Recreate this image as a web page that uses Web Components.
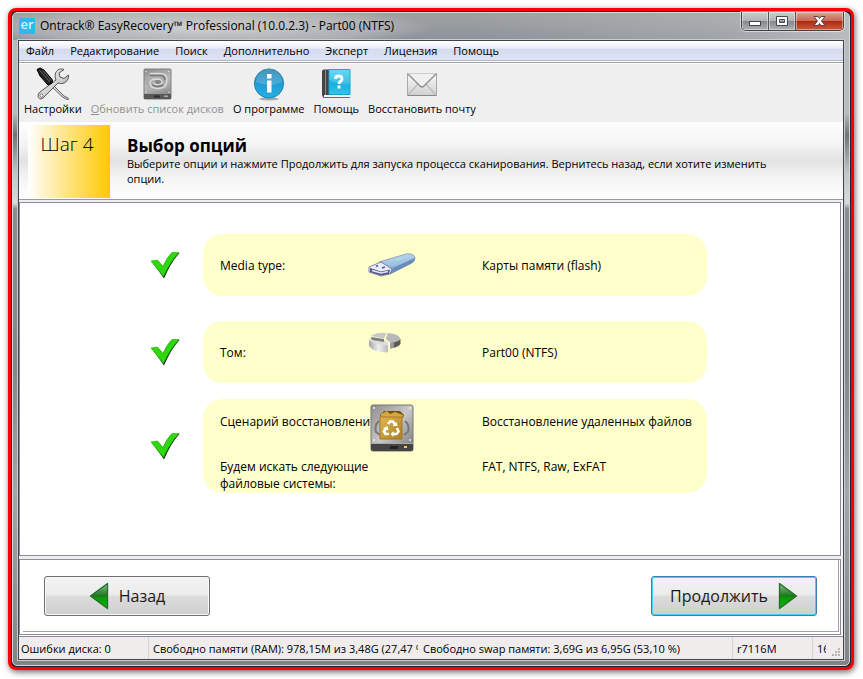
<!DOCTYPE html>
<html lang="ru">
<head>
<meta charset="utf-8">
<title>Ontrack EasyRecovery</title>
<style>
    body{
        margin: 0;
        padding: 8px 9px 9px 8px;
        box-sizing: border-box;
        min-height: 100vh;
        display: flex;
        background: white;
        font: 12px "Open Sans", "Noto Sans", sans-serif;
        color: black;
    }
</style>
</head>
<body>

<app-window>
    <span slot="title">Ontrack® EasyRecovery™ Professional (10.0.2.3) - Part00 (NTFS)</span>
    <menu-bar items="Файл,Редактирование,Поиск,Дополнительно,Эксперт,Лицензия,Помощь"></menu-bar>
    <tool-bar>
        <tool-button icon="tools">Настройки</tool-button>
        <tool-button icon="disk" disabled><u>О</u>бновить список дисков</tool-button>
        <tool-button icon="info">О программе</tool-button>
        <tool-button icon="book">Помощь</tool-button>
        <tool-button icon="mail">Восстановить почту</tool-button>
    </tool-bar>
    <step-header>
        <span slot="step">Шаг 4</span>
        <span slot="title">Выбор опций</span>
        Выберите опции и нажмите Продолжить для запуска процесса сканирования. Вернитесь назад, если хотите изменить опции.
    </step-header>
    <option-list>
        <option-row icon="usb">
            <span slot="label">Media type:</span>
            <span slot="value">Карты памяти (flash)</span>
        </option-row>
        <option-row icon="volume">
            <span slot="label">Том:</span>
            <span slot="value">Part00 (NTFS)</span>
        </option-row>
        <option-row icon="recycle" tall>
            <span slot="label">Сценарий восстановлени</span>
            <span slot="value">Восстановление удаленных файлов</span>
            <span slot="label2">Будем искать следующие файловые системы:</span>
            <span slot="value2">FAT, NTFS, Raw, ExFAT</span>
        </option-row>
    </option-list>
    <wizard-footer>
        <nav-button direction="back">Назад</nav-button>
        <nav-button direction="next">Продолжить</nav-button>
    </wizard-footer>
    <status-bar>
        <span>Ошибки диска: 0</span>
        <span>Свободно памяти (RAM): 978,15M из 3,48G (27,47 %)</span>
        <span>Свободно swap памяти: 3,69G из 6,95G (53,10 %)</span>
        <span>r7116M</span>
        <span>16</span>
    </status-bar>
</app-window>

<script>
const ICONS = {
    tools: `<svg width="34" height="34" viewBox="0 0 34 34">
        <defs><linearGradient id="m" x2="1" y2="1"><stop stop-color="#fff"/><stop offset=".6" stop-color="#ccc"/><stop offset="1" stop-color="#777"/></linearGradient></defs>
        <path d="M15 16 L28 29 L32 31 L32.500 32.500 L30 32 L26 29.500 L14 18z" fill="#ddd" stroke="#555" stroke-width=".9"/>
        <path d="M20 13 L4 25 C0 29 3 34 7 31 L9 29 L22 16 C28 18 33 14 32.500 8 L28 11.500 L24 10 L23 6 L28 2.500 C22 0 17 6 20 13z" fill="url(#m)" stroke="#555"/>
        <circle cx="5.500" cy="28.500" r="1.600" fill="#fff" stroke="#666" stroke-width=".8"/>
        <path d="M1 2.500 L4 1 L8 3 L16.500 13 L16 16 L12 18 L4 9z" fill="#222" stroke="#000"/>
        <path d="M4 3.500 L14 15 M7 3.500 L15.500 13.500" stroke="#777" stroke-width=".8"/>
    </svg>`,
    disk: `<svg width="34" height="34" viewBox="0 0 34 34">
        <defs><linearGradient id="d" x2=".3" y2="1"><stop stop-color="#8c8c8c"/><stop offset=".55" stop-color="#bdbdbd"/><stop offset="1" stop-color="#8c8c8c"/></linearGradient></defs>
        <rect x="4" y="2" width="27" height="30" rx="1" fill="url(#d)" stroke="#808080"/>
        <path d="M4 27h27v5h-27z" fill="#585858"/>
        <path d="M14 28.500h6v2h-6z" fill="#2e2e2e"/><path d="M24 28.500h4v1.500h-4z" fill="#aaa"/>
        <ellipse cx="17.500" cy="15" rx="12" ry="8.500" fill="#adadad"/>
        <path d="M10 6.500 H20 Q27 6.500 27 13 Q27 21.500 18 21.500 Q10 21.500 10 16 Q10 12 17 12 Q22 12 22 16 Q21 17.500 17 17.500 Q14.500 17.500 14.500 15.500" fill="none" stroke="#dcdcdc" stroke-width="1.400"/>
        <path d="M10 8.500 H20 Q25 8.500 25 13 M12 18 Q17 21 23 18" fill="none" stroke="#777" stroke-width="1.400"/>
        <ellipse cx="18" cy="15" rx="3" ry="2" fill="#888"/>
        <circle cx="6" cy="4.500" r=".8" fill="#ddd"/><circle cx="29" cy="4.500" r=".8" fill="#ddd"/>
        <circle cx="6" cy="25" r=".8" fill="#ddd"/><circle cx="29" cy="25" r=".8" fill="#ddd"/>
    </svg>`,
    info: `<svg width="34" height="34" viewBox="0 0 34 34">
        <defs><linearGradient id="b" x2="0" y2="1"><stop stop-color="#1f7da5"/><stop offset=".5" stop-color="#229bd3"/><stop offset="1" stop-color="#27b0e4"/></linearGradient></defs>
        <ellipse cx="17" cy="32" rx="10" ry="1.500" fill="#aaa"/>
        <circle cx="17" cy="16.500" r="14.600" fill="url(#b)" stroke="#2383ab"/>
        <path d="M4 15 A13 13 0 0 1 30 15 Q17 21 4 15z" fill="#fff" opacity=".18"/>
        <rect x="15" y="7" width="4.500" height="4.500" fill="#fff"/><rect x="15" y="13.500" width="4.500" height="12" fill="#fff"/>
    </svg>`,
    book: `<svg width="34" height="34" viewBox="0 0 34 34">
        <defs><linearGradient id="k" x2="0" y2="1"><stop stop-color="#4cd3ef"/><stop offset=".6" stop-color="#19afe0"/><stop offset="1" stop-color="#35c4ea"/></linearGradient></defs>
        <path d="M3 4 Q3 2.500 5 2.500 H31 V30 H5 Q3 30 3 28z" fill="#444"/>
        <path d="M6.500 2.500V28" stroke="#888"/>
        <path d="M10 2.500H31V27.500H10z" fill="url(#k)" stroke="#159fcb"/>
        <path d="M31 2.500V17Q22 19 10 13V2.500z" fill="#fff" opacity=".15"/>
        <path d="M5 28h26v2h-26z" fill="#eef6f8"/><path d="M4 30.500h27" stroke="#2282a0"/>
        <path d="M16.500 12 Q16.500 9 19.500 9 Q23 9 23 12 Q23 14 20.500 15 L20 17" fill="none" stroke="#fff" stroke-width="2.800"/>
        <rect x="18.500" y="18.500" width="3" height="3" fill="#fff"/>
    </svg>`,
    mail: `<svg width="34" height="34" viewBox="0 0 34 34">
        <defs><linearGradient id="e" x2="0" y2="1"><stop stop-color="#fafafa"/><stop offset="1" stop-color="#d0d0d0"/></linearGradient></defs>
        <rect x="2.500" y="6.500" width="29" height="22" fill="url(#e)" stroke="#aaa"/>
        <path d="M3 28 L13 17 M31 28 L21 17" stroke="#bbb" stroke-width="1.200"/>
        <path d="M3 7 L15 19 Q17 21 19 19 L31 7" fill="#f0f0f0" stroke="#8c8c8c" stroke-width="1.300"/>
        <path d="M3 6.500H31" stroke="#ccc"/><path d="M3 28.500H31" stroke="#888"/>
    </svg>`,
    usb: `<svg width="48" height="26" viewBox="0 0 48 26">
        <defs><linearGradient id="u" x2=".3" y2="1"><stop stop-color="#c9e0f3"/><stop offset=".6" stop-color="#9cc1e2"/><stop offset="1" stop-color="#6f93bd"/></linearGradient></defs>
        <path d="M11 10 L38 2 Q46 1 47 6 Q47 10 42 12 L22 22 Q18 20 16 17z" fill="url(#u)" stroke="#7897bd" stroke-width=".8"/>
        <path d="M22 22 L43 11.500 Q47 9 46.500 6 L25 16z" fill="#688cb7"/>
        <path d="M1 15 L13 10 L24 17 L22 22 L13 24 L1 20z" fill="#e8ecf8" stroke="#66699a" stroke-width=".8"/>
        <path d="M2 16 L13 19.500 L22 17.500 L21 22 L13 23.500 L2 20z" fill="#56588a"/>
        <path d="M4 18.500 L13 21 L20 19.500" fill="none" stroke="#e4e5f4" stroke-width="1.600"/>
        <path d="M8 14.500l2-1 M14 16l3-1" stroke="#555b86" stroke-width="1.500"/>
        <path d="M27 8 Q30 5 34 6.500 Q31 10 27 8z" fill="#a6e6c5"/>
    </svg>`,
    volume: `<svg width="34" height="22" viewBox="0 0 34 22">
        <defs><linearGradient id="v" x2="1"><stop stop-color="#a4a4a4"/><stop offset=".5" stop-color="#efefef"/><stop offset="1" stop-color="#bbb"/></linearGradient></defs>
        <path d="M1 8V14Q5 20 20 20.500V12.500z" fill="url(#v)"/>
        <path d="M1 8 L3 5 L16 8 L20 10 V13 Q7 14 1 8z" fill="#ddd"/>
        <path d="M3 5 L16 7 V10 L4 8z" fill="#808080"/>
        <path d="M3 4 Q9 0 19 1 L16 6.500z" fill="#c9c9c9"/>
        <path d="M20 1 Q31 2 32.500 7 Q31 10 23 11 L17.500 7z" fill="#b8b8b8"/>
        <path d="M32.500 7V12 Q30 15.500 22 16.500V11 Q30 10 32.500 7z" fill="#5a5a5a"/><path d="M22 11V16.500L26 15.500V10z" fill="#999"/>
    </svg>`,
    recycle: `<svg width="46" height="48" viewBox="0 0 46 48">
        <defs><linearGradient id="r" x2="1" y2="1"><stop stop-color="#8d8d8d"/><stop offset=".5" stop-color="#c8c8c8"/><stop offset="1" stop-color="#777"/></linearGradient>
        <linearGradient id="g" x2="1" y2="1"><stop stop-color="#dfb650"/><stop offset="1" stop-color="#ae7f25"/></linearGradient></defs>
        <rect x="2" y="1" width="42" height="46" rx="2" fill="url(#r)" stroke="#777"/>
        <path d="M2 40h42v5q0 2-2 2h-38q-2 0-2-2z" fill="#454545"/><path d="M2 39.500h42" stroke="#aaa"/>
        <rect x="21" y="42" width="8" height="3" fill="#222"/><rect x="35" y="42" width="3" height="2" fill="#fc4"/>
        <circle cx="5" cy="4" r="1" fill="#eee"/><circle cx="41" cy="4" r="1" fill="#eee"/><circle cx="5" cy="36" r="1" fill="#eee"/><circle cx="41" cy="36" r="1" fill="#eee"/>
        <path d="M10 17Q5 21 7 28L11 31M36 17Q41 21 39 28L35 31" fill="none" stroke="#777" stroke-width="2"/>
        <path d="M11 11 L15 7H31L35 11L34 14H12z" fill="#73500f"/>
        <path d="M12 10L18 7L21 10L26 8L34 11L33 15H12z" fill="#d9a83c"/>
        <path d="M11 13H33V35H11z" fill="url(#g)" stroke="#a6792b"/>
        <path d="M19 20 L21 17.500 H24 L26 20.500 M28 24L29.500 27.500L27.500 30H24 M20 30H16.500L15 27.500L17 24" fill="none" stroke="#fff" stroke-width="2.600"/>
        <path d="M23.500 22L28.500 22L27.500 18z M24.500 27V33L21.500 30z M14 24.500L18.500 22L19.500 26.500z" fill="#fff"/>
    </svg>`,
    check: `<svg width="30" height="28" viewBox="2 -1 30 28">
        <path d="M3 9.500 L9 9 L14 15 Q18 6 24 1 L30.500 1 Q22 10 15 26.500z" fill="#062206"/>
        <path d="M2 9 L8.500 8 L14 14.500 Q18 5 23 .5 L30 .5 Q21 10 14.500 24.500z" fill="#2fd80c" stroke="#22a90b" stroke-width=".6"/>
    </svg>`,
    arrow: `<svg width="20" height="28" viewBox="0 0 20 28">
        <defs><linearGradient id="a" x2="0" y2="1"><stop stop-color="#8ac38a"/><stop offset=".5" stop-color="#1b751d"/><stop offset=".55" stop-color="#079807"/><stop offset="1" stop-color="#04bb04"/></linearGradient></defs>
        <path d="M1.500 1.500 L18.500 14 L1.500 26.500z" fill="url(#a)" stroke="#256b2a" stroke-width="1.300" stroke-linejoin="round"/>
    </svg>`
};

class AppWindow extends HTMLElement{
    constructor(){
        super();
        this.attachShadow({ mode: "open" });
        this.shadowRoot.innerHTML = `
        <style>
            :host{
                flex: 1;
                min-width: 0;
                display: flex;
                border: 3px solid red;
                border-radius: 8px;
                background: #222;
                box-shadow: 1px 2px 6px rgb(0 0 0 / 60%);
            }

            .glass{
                flex: 1;
                min-width: 0;
                display: flex;
                flex-direction: column;
                margin: 1px;
                padding: 0 5px 5px;
                border: 1px solid #d5d8da;
                border-radius: 5px;
                background:
                    linear-gradient(rgb(150 155 158 / 60%), rgb(150 155 158 / 0%) 30px),
                    linear-gradient(#b6bbbd 0 100px, #707477 122px, #bfc5c8 160px, #d7dbdd 190px, #8a8d90 196px, #85888a 360px, #a3a7aa 480px, #818487);
            }

            header{
                display: flex;
                align-items: flex-start;
                height: 27px;
                margin: 0 -5px;
                padding-left: 5px;
                border-radius: 4px 4px 0 0;
                background:
                    radial-gradient(ellipse 230px 22px at 190px 15px, rgb(230 230 230 / 70%), rgb(210 210 210 / 40%) 75%, rgb(200 200 200 / 0%)),
                    linear-gradient(90deg, transparent 55%, rgb(205 205 205 / 30%) 85%, #b9bcbf),
                    linear-gradient(#a0a0a0, #9a9da0 10px, #8b929a);
            }

            .logo{
                width: 16px;
                height: 16px;
                margin: 5px 0 0 1px;
                background: #2bb9ee;
                color: #d2f5ff;
                font: 600 13px/13px "Open Sans", sans-serif;
                text-align: center;
            }

            h1{
                flex: 1;
                margin: 4px 0 0 5px;
                font-size: 12px;
                font-weight: 400;
                line-height: 18px;
                white-space: nowrap;
            }

            .controls{
                display: flex;
                margin: -1px 5px 0 0;
                border: 1px solid #444;
                border-top: 0;
                border-radius: 0 0 5px 5px;
                overflow: hidden;
                box-shadow: 0 0 0 1px rgb(255 255 255 / 50%);
            }

            button{
                display: grid;
                place-items: center;
                width: 27px;
                height: 18px;
                padding: 0;
                border: 0;
                border-right: 1px solid #555;
                background: linear-gradient(#cdcece, #b0b2b3 48%, #858789 52%, #aeb2b5);
                box-shadow: inset 0 0 0 1px rgb(255 255 255 / 40%);
            }

            button.close{
                width: 47px;
                border: 0;
                background: linear-gradient(#dca49a, #cb6752 48%, #a92a12 52%, #cf5a3e);
            }

            .client{
                flex: 1;
                min-width: 0;
                display: flex;
                flex-direction: column;
                border: 1px solid #43434b;
                outline: 1px solid #c9cdcf;
                background: white;
            }
        </style>
        <div class="glass">
            <header>
                <div class="logo">er</div>
                <h1><slot name="title"></slot></h1>
                <div class="controls">
                    <button aria-label="Свернуть"><svg width="13" height="12"><rect x=".5" y="6.500" width="11" height="4" fill="#fff" stroke="#445"/></svg></button>
                    <button aria-label="Развернуть"><svg width="12" height="12"><path d="M.5 1.500h11v9h-11z M3.500 4.500v3h5v-3z" fill="#fff" fill-rule="evenodd" stroke="#445"/></svg></button>
                    <button class="close" aria-label="Закрыть"><svg width="13" height="12"><path d="M1 1.500h4l1.500 2 1.500-2h4l-3.500 4.500 3.500 4.500h-4l-1.500-2-1.500 2h-4l3.500-4.500z" fill="#fff" stroke="#544"/></svg></button>
                </div>
            </header>
            <div class="client"><slot></slot></div>
        </div>
        `;
    }
}

class MenuBar extends HTMLElement{
    constructor(){
        super();
        this.attachShadow({ mode: "open" });
        this.shadowRoot.innerHTML = `
        <style>
            :host{
                display: block;
                border-bottom: 1px solid #b3b5c6;
                background: linear-gradient(#fff, #e9edf6 38%, #d5dbee 42%, #dee3f4);
            }

            nav{
                display: flex;
                gap: 16px;
                height: 19px;
                padding: 0 7px;
            }

            button{
                padding: 0;
                border: 0;
                background: none;
                color: inherit;
                font: inherit;
                font-size: 11px;
                line-height: 19px;
            }
        </style>
        <nav></nav>
        `;
        const nav = this.shadowRoot.querySelector("nav");
        for(const item of this.getAttribute("items").split(",")){
            const button = document.createElement("button");
            button.textContent = item;
            nav.appendChild(button);
        }
    }
}

class ToolBar extends HTMLElement{
    constructor(){
        super();
        this.attachShadow({ mode: "open" });
        this.shadowRoot.innerHTML = `
        <style>
            :host{
                display: flex;
                gap: 9px;
                height: 59px;
                margin-top: 1px;
                padding: 0 5px;
                border-top: 1px solid #a0a0a0;
                background: #efefef;
                box-shadow: inset 0 1px #fff;
            }
        </style>
        <slot></slot>
        `;
    }
}

class ToolButton extends HTMLElement{
    constructor(){
        super();
        this.attachShadow({ mode: "open" });
        const disabled = this.hasAttribute("disabled") ? "disabled" : "";
        this.shadowRoot.innerHTML = `
        <style>
            :host{
                display: block;
            }

            button{
                display: flex;
                flex-direction: column;
                align-items: center;
                padding: 4px 0 0;
                border: 0;
                background: none;
                color: inherit;
                font: 11px/15px "Open Sans", "Noto Sans", sans-serif;
                white-space: nowrap;
            }

            button:disabled{
                color: #929292;
            }
        </style>
        <button ${disabled}>${ICONS[this.getAttribute("icon")]}<span><slot></slot></span></button>
        `;
    }
}

class StepHeader extends HTMLElement{
    constructor(){
        super();
        this.attachShadow({ mode: "open" });
        this.shadowRoot.innerHTML = `
        <style>
            :host{
                display: flex;
                height: 74px;
                padding: 3px 0 0 9px;
                border-bottom: 1px solid #9a9a9e;
                background: linear-gradient(#fff, #f3f3f3 30%, #e2e2e2 50%, #f4f4f4 72%, #fff);
            }

            .step{
                width: 82px;
                height: 73px;
                padding: 5px 4px 0 0;
                box-sizing: border-box;
                background: linear-gradient(90deg, #fff, #fff0bd 25%, #ffc900);
                font-size: 19px;
                font-weight: 300;
                line-height: 28px;
                text-align: center;
            }

            .text{
                flex: 1;
                padding: 10px 48px 0 17px;
                font-size: 11px;
                line-height: 15px;
            }

            h2{
                margin: 0;
                font-size: 17px;
                line-height: 21px;
            }

            p{
                margin: 0;
            }
        </style>
        <div class="step"><slot name="step"></slot></div>
        <div class="text">
            <h2><slot name="title"></slot></h2>
            <p><slot></slot></p>
        </div>
        `;
    }
}

class OptionList extends HTMLElement{
    constructor(){
        super();
        this.attachShadow({ mode: "open" });
        this.shadowRoot.innerHTML = `
        <style>
            :host{
                flex: 1;
                display: block;
                border-top: 2px solid #efefef;
                border-right: 2px solid #f4f4f4;
                border-bottom: 3px solid #efefef;
            }

            main{
                height: 100%;
                box-sizing: border-box;
                padding: 31px 18px 0 16px;
                border: 1px solid #8d8b97;
            }

            .rows{
                display: grid;
                max-width: 556px;
                margin: 0 auto;
            }
        </style>
        <main><div class="rows"><slot></slot></div></main>
        `;
    }
}

class OptionRow extends HTMLElement{
    constructor(){
        super();
        this.attachShadow({ mode: "open" });
        this.shadowRoot.innerHTML = `
        <style>
            :host{
                display: grid;
                grid-template-columns: 52px 1fr;
                align-items: center;
                margin-bottom: 25px;
                line-height: 17px;
            }

            :host([icon="volume"]){
                margin-bottom: 16px;
            }

            .pill{
                display: grid;
                grid-template-columns: 148px 114px 1fr;
                align-items: center;
                height: 62px;
                padding-left: 17px;
                box-sizing: border-box;
                border-radius: 20px;
                background: #ffffcc;
                white-space: nowrap;
            }

            svg{
                display: block;
            }

            :host([icon="volume"]) .icon{
                align-self: start;
                padding-top: 11px;
            }

            :host([tall]) .pill{
                grid-template-rows: 45px 49px;
                height: 94px;
            }

            :host([tall]) .icon{
                grid-area: 1 / 2 / 3 / 3;
                align-self: start;
                padding: 5px 0 0 1px;
                z-index: 1;
            }

            .second{
                align-self: start;
                padding-top: 14px;
                width: 156px;
                white-space: normal;
            }

            .label{
                grid-column: 1;
            }

            .value{
                grid-column: 3;
            }
        </style>
        ${ICONS.check}
        <div class="pill">
            <span><slot name="label"></slot></span>
            <span class="icon">${ICONS[this.getAttribute("icon")]}</span>
            <span><slot name="value"></slot></span>
            ${this.hasAttribute("tall") ? `
            <span class="second label"><slot name="label2"></slot></span>
            <span class="second value"><slot name="value2"></slot></span>` : ""}
        </div>
        `;
    }
}

class WizardFooter extends HTMLElement{
    constructor(){
        super();
        this.attachShadow({ mode: "open" });
        this.shadowRoot.innerHTML = `
        <style>
            :host{
                display: block;
                border-right: 2px solid #f4f4f4;
            }

            footer{
                border: 1px solid #8d8b97;
                padding: 0 1px 2px 3px;
            }

            .inner{
                display: flex;
                align-items: center;
                justify-content: space-between;
                height: 72px;
                box-sizing: border-box;
                padding: 1px 21px 0;
                border-right: 1px solid #a09ea8;
                border-bottom: 1px solid #a09ea8;
            }
        </style>
        <footer><div class="inner"><slot></slot></div></footer>
        `;
    }
}

class NavButton extends HTMLElement{
    constructor(){
        super();
        this.attachShadow({ mode: "open" });
        this.shadowRoot.innerHTML = `
        <style>
            :host{
                display: block;
            }

            button{
                display: flex;
                align-items: center;
                justify-content: center;
                gap: 10px;
                width: 166px;
                height: 40px;
                padding: 0;
                border: 1px solid #707070;
                border-radius: 3px;
                background: linear-gradient(#f3f3f3, #ebebeb 48%, #dcdcdc 50%, #cfcfcf);
                box-shadow: inset 0 0 0 1px #f8f8f8;
                color: #1a1a1a;
                font: 16px "Open Sans", "Noto Sans", sans-serif;
            }

            :host([direction="next"]) button{
                flex-direction: row-reverse;
                border-color: #3c7fb1;
                box-shadow: inset 0 0 0 1px #48d0f8;
            }

            :host([direction="back"]) svg{
                transform: scaleX(-1);
            }
        </style>
        <button>${ICONS.arrow}<span><slot></slot></span></button>
        `;
    }
}

class StatusBar extends HTMLElement{
    constructor(){
        super();
        this.attachShadow({ mode: "open" });
        this.shadowRoot.innerHTML = `
        <style>
            :host{
                display: grid;
                grid-template-columns: 129fr 270fr 314fr 80fr 14fr 17px;
                height: 22px;
                margin-top: 1px;
                border-top: 1px solid #8d8b97;
                background: #f0ecec;
                font-size: 11px;
                line-height: 24px;
            }

            ::slotted(span){
                min-width: 0;
                padding-left: 4px;
                overflow: hidden;
                white-space: nowrap;
                border-left: 1px solid #d4d4d4;
            }

            ::slotted(span:first-child){
                padding-left: 2px;
                border: 0;
            }

            ::slotted(span:nth-child(3)){
                border-color: transparent;
            }

            svg{
                align-self: end;
                justify-self: end;
                margin: 0 2px 2px 0;
            }
        </style>
        <slot></slot>
        <svg width="9" height="9" fill="#b5b5b5"><path d="M6 0h2v2H6zM3 3h2v2H3zM6 3h2v2H6zM0 6h2v2H0zM3 6h2v2H3zM6 6h2v2H6z"/></svg>
        `;
    }
}

customElements.define("app-window", AppWindow);
customElements.define("menu-bar", MenuBar);
customElements.define("tool-bar", ToolBar);
customElements.define("tool-button", ToolButton);
customElements.define("step-header", StepHeader);
customElements.define("option-list", OptionList);
customElements.define("option-row", OptionRow);
customElements.define("wizard-footer", WizardFooter);
customElements.define("nav-button", NavButton);
customElements.define("status-bar", StatusBar);
</script>
</body>
</html>
